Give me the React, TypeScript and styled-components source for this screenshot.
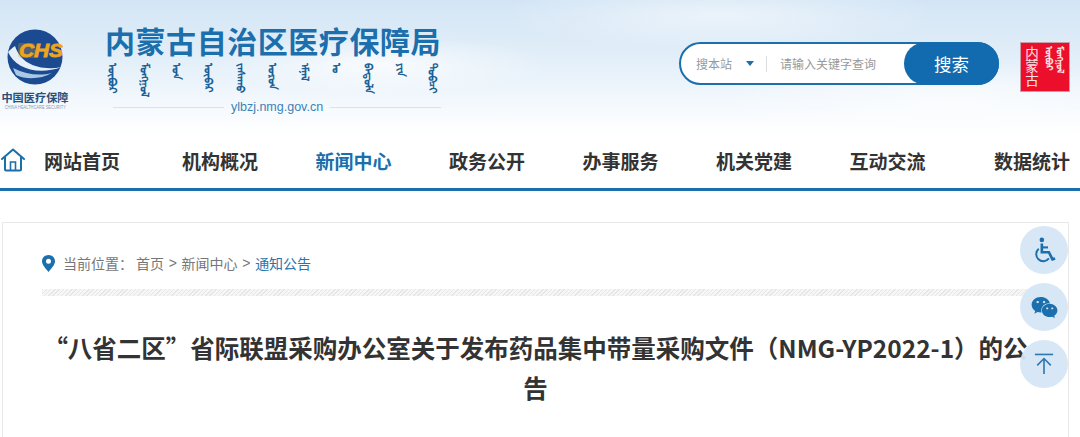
import React from 'react';
import styled, { createGlobalStyle } from 'styled-components';
import { FaWeixin } from 'react-icons/fa';

const navItems = ['新闻中心', '政务公开', '办事服务', '机关党建', '互动交流'];
const mongolWords = ['ᠥᠪᠦᠷ', 'ᠮᠣᠩᠭᠣᠯ', 'ᠤᠨ', 'ᠥᠪᠡᠷ', 'ᠵᠠᠰᠠᠬᠤ', 'ᠣᠷᠣᠨ', 'ᠡᠮᠨᠡᠯ', 'ᠤ', 'ᠪᠠᠲᠤᠯᠠ', 'ᠶᠢᠨ', 'ᠲᠣᠪᠴᠢ'];

const App: React.FC = () => {
  return (
    <Page>
      <GlobalStyle />
      <Header>
        <LogoBlock>
          <svg width="56" height="58" viewBox="0 0 56 58">
            <circle cx="28" cy="29" r="27.5" fill="#1c4a90" />
            <path d="M1 24 C8 40 30 48 55 39 C34 43 14 37 8 18 C5 20 3 22 1 24 Z" fill="#e3eff9" />
            <path d="M9 47 C20 52 34 51 45 45 C33 48 20 47 6 40 Z" fill="#a9c8e6" />
            <rect x="11" y="15" width="17" height="15" rx="2" fill="#eda51e" opacity="0.25" />
            <text x="12" y="29" fontFamily="Liberation Sans" fontWeight="700" fontStyle="italic" fontSize="18" fill="#eda51e" stroke="#eda51e" strokeWidth="0.8" textLength="44" lengthAdjust="spacingAndGlyphs">CHS</text>
          </svg>
          <LogoName>中国医疗保障</LogoName>
          <LogoSub>CHINA HEALTHCARE SECURITY</LogoSub>
        </LogoBlock>
        <TitleBlock>
          <SiteTitle>内蒙古自治区医疗保障局</SiteTitle>
          <MongolRow>
            {mongolWords.map((word, i) => (
              <MongolWord key={i}>{word}</MongolWord>
            ))}
          </MongolRow>
          <UrlRow>ylbzj.nmg.gov.cn</UrlRow>
        </TitleBlock>
        <SearchBar>
          <ScopeLabel>搜本站</ScopeLabel>
          <Caret />
          <SearchDivider />
          <Placeholder>请输入关键字查询</Placeholder>
          <SearchButton>搜索</SearchButton>
        </SearchBar>
        <Seal>
          <SealText>内蒙古</SealText>
          <SealMongol>ᠥᠪᠦᠷ ᠮᠣᠩᠭᠣᠯ</SealMongol>
        </Seal>
      </Header>

      <Nav>
        <svg width="24" height="24" viewBox="0 0 24 24" fill="none" stroke="#1a6fac" strokeWidth="2">
          <path d="M1 11 L12 1.5 L23 11" strokeLinejoin="round" strokeLinecap="round" />
          <path d="M4 9 V21.5 a1 1 0 0 0 1 1 H19 a1 1 0 0 0 1 -1 V9" />
          <path d="M9.5 22 V14 H14.5 V22" strokeWidth="1.6" />
        </svg>
        <NavItem $left={19}>网站首页</NavItem>
        <NavItem $left={4.5}>机构概况</NavItem>
        {navItems.map((item) => (
          <NavItem key={item} $active={item === '新闻中心'}>{item}</NavItem>
        ))}
        <NavItem $left={11}>数据统计</NavItem>
      </Nav>

      <Content>
        <Breadcrumb>
          <svg width="13" height="17" viewBox="0 0 13 17">
            <path fillRule="evenodd" fill="#1a6fac" d="M6.5 0 C10.2 0 13 2.8 13 6.3 C13 10 9 14 6.5 17 C4 14 0 10 0 6.3 C0 2.8 2.8 0 6.5 0 Z M6.5 3.8 A2.5 2.5 0 1 0 6.5 8.8 A2.5 2.5 0 1 0 6.5 3.8 Z" />
          </svg>
          <CrumbLabel>当前位置：</CrumbLabel>
          <span>首页</span>
          <CrumbSep>&gt;</CrumbSep>
          <span>新闻中心</span>
          <CrumbSep>&gt;</CrumbSep>
          <CrumbCurrent>通知公告</CrumbCurrent>
        </Breadcrumb>
        <Hatch />
        <ArticleTitle>“八省二区”省际联盟采购办公室关于发布药品集中带量采购文件（NMG-YP2022-1）的公告</ArticleTitle>
      </Content>

      <FloatTools>
        <ToolButton>
          <svg width="23" height="27" viewBox="0 0 26 30" fill="none" stroke="#1a6fac" strokeWidth="2.2">
            <circle cx="10" cy="3" r="2.6" fill="#1a6fac" stroke="none" />
            <path d="M10 7 V17 H18 L22 25 L25 24" strokeWidth="3" />
            <path d="M10 11.5 H17" strokeWidth="2.4" />
            <path d="M6.5 13 A8 8 0 1 0 18 24" />
          </svg>
        </ToolButton>
        <ToolButton>
          <FaWeixin size={27} color="#1a6fac" />
        </ToolButton>
        <ToolButton>
          <svg width="20" height="22" viewBox="0 0 22 24" fill="none" stroke="#2f78b0" strokeWidth="1.8">
            <path d="M1 1.5 H21" />
            <path d="M11 23 V6 M3.5 13.5 L11 6 L18.5 13.5" />
          </svg>
        </ToolButton>
      </FloatTools>
    </Page>
  );
};

const GlobalStyle = createGlobalStyle`
  html, body {
    margin: 0;
    padding: 0;
    overflow: hidden;
    background: #fff;
  }
`;

const Page = styled.div`
  position: relative;
  width: 1080px;
  height: 437px;
  overflow: hidden;
  font-family: 'Noto Sans CJK SC', 'Liberation Sans', sans-serif;
  background: #fff;
`;

const Header = styled.header`
  display: flex;
  align-items: flex-start;
  height: 135px;
  box-sizing: border-box;
  padding: 28px 10px 0 1px;
  background:
    radial-gradient(ellipse 170px 30px at 380px 65px, rgba(255,255,255,.75), transparent),
    radial-gradient(ellipse 220px 35px at 720px 15px, rgba(255,255,255,.5), transparent),
    radial-gradient(ellipse 240px 40px at 950px 100px, rgba(255,255,255,.6), transparent),
    linear-gradient(180deg, #d3e5f5 0%, #e3eff9 45%, #f8fbfe 85%, #fff 100%);
`;

const LogoBlock = styled.div`
  display: flex;
  flex-direction: column;
  align-items: center;
  width: 68px;
  svg { display: block; }
`;

const LogoName = styled.div`
  margin-top: 4px;
  font-size: 11.2px;
  line-height: 14px;
  font-weight: 700;
  color: #2a4f78;
  white-space: nowrap;
`;

const LogoSub = styled.div`
  font-family: 'Liberation Sans', sans-serif;
  font-size: 5px;
  line-height: 6px;
  color: #8a9cb0;
  white-space: nowrap;
  transform: scaleX(0.8);
`;

const TitleBlock = styled.div`
  display: flex;
  flex-direction: column;
  width: 336px;
  margin: -6px 0 0 36px;
`;

const SiteTitle = styled.div`
  font-size: 30px;
  line-height: 36px;
  font-weight: 700;
  letter-spacing: 0.55px;
  color: #1a6fac;
  white-space: nowrap;
`;

const MongolRow = styled.div`
  display: flex;
  justify-content: space-between;
  height: 32px;
  margin-top: 5px;
  padding: 0 2px;
`;

const MongolWord = styled.span`
  writing-mode: vertical-lr;
  font-size: 10.5px;
  line-height: 12px;
  font-weight: 700;
  color: #1c5f94;
`;

const UrlRow = styled.div`
  display: flex;
  align-items: center;
  gap: 7px;
  height: 16px;
  margin-top: 4px;
  padding-left: 8px;
  font-family: 'Liberation Sans', sans-serif;
  font-size: 12.5px;
  color: #3a82b8;

  &::before, &::after {
    content: '';
    flex: 1;
    height: 1px;
    background: #d6e4ef;
  }
`;

const SearchBar = styled.div`
  display: flex;
  align-items: center;
  width: 320px;
  height: 43px;
  box-sizing: border-box;
  margin: 14px 0 0 238px;
  padding-left: 15px;
  background: #fff;
  border: 2px solid #1a6fac;
  border-radius: 22px;
`;

const ScopeLabel = styled.span`
  font-size: 12px;
  color: #999;
`;

const Caret = styled.span`
  width: 0;
  height: 0;
  margin-left: 14px;
  border: 4px solid transparent;
  border-top: 5px solid #1a6fac;
  border-bottom: 0;
`;

const SearchDivider = styled.span`
  width: 1px;
  height: 16px;
  margin: 0 13px 0 12px;
  background: #ddd;
`;

const Placeholder = styled.span`
  flex: 1;
  font-size: 12px;
  color: #999;
`;

const SearchButton = styled.div`
  display: flex;
  align-items: center;
  justify-content: center;
  width: 95px;
  height: 43px;
  margin-right: -2px;
  border-radius: 22px;
  background: #126bae;
  color: #fff;
  font-size: 17.5px;
`;

const Seal = styled.div`
  display: flex;
  justify-content: space-between;
  width: 50px;
  height: 50px;
  box-sizing: border-box;
  margin: 14px 0 0 21px;
  padding: 3px 3px;
  background: #ec0f2c;
  border: 1px solid #c9a0a8;
  overflow: hidden;
`;

const SealText = styled.span`
  writing-mode: vertical-rl;
  font-size: 13.5px;
  line-height: 15px;
  color: #fbe3e3;
`;

const SealMongol = styled.span`
  writing-mode: vertical-lr;
  font-size: 9px;
  line-height: 11px;
  font-weight: 700;
  color: #fbe3e3;
`;

const Nav = styled.nav`
  display: flex;
  align-items: center;
  gap: 57.5px;
  height: 56px;
  box-sizing: border-box;
  padding: 0 0 3px 1px;
  border-bottom: 3px solid #1a6fac;
  white-space: nowrap;
  svg { flex-shrink: 0; margin-right: -57.5px; }
`;

const NavItem = styled.a<{ $active?: boolean; $left?: number }>`
  font-size: 19px;
  font-weight: 700;
  color: ${(p) => (p.$active ? '#1a6fac' : '#333')};
  margin-left: ${(p) => p.$left ?? 0}px;
`;

const Content = styled.main`
  width: 1067px;
  box-sizing: border-box;
  margin: 31px 0 0 2px;
  padding: 29px 39px 0;
  height: 300px;
  border: 1px solid #e8e8e8;
  border-bottom: 0;
`;

const Breadcrumb = styled.div`
  display: flex;
  align-items: center;
  height: 22px;
  font-size: 14px;
  color: #777;
  svg { margin-right: 8px; }
`;

const CrumbLabel = styled.span`
  width: 73px;
`;

const CrumbSep = styled.span`
  margin: 0 4.7px;
  font-family: 'Liberation Sans', sans-serif;
`;

const CrumbCurrent = styled.span`
  color: #2a74ad;
`;

const Hatch = styled.div`
  height: 7px;
  margin-top: 15px;
  background: repeating-linear-gradient(135deg, #e6e6e6 0 1px, #f6f6f6 1px 3px);
`;

const ArticleTitle = styled.h1`
  margin: 32px 0 0;
  font-size: 24.5px;
  line-height: 40px;
  font-weight: 700;
  color: #333;
  text-align: center;
`;

const FloatTools = styled.div`
  position: absolute;
  top: 226px;
  left: 1020px;
  display: flex;
  flex-direction: column;
  gap: 9px;
`;

const ToolButton = styled.div`
  display: flex;
  align-items: center;
  justify-content: center;
  width: 48px;
  height: 48px;
  border-radius: 50%;
  background: rgba(214, 230, 246, 0.95);
`;

export default App;
